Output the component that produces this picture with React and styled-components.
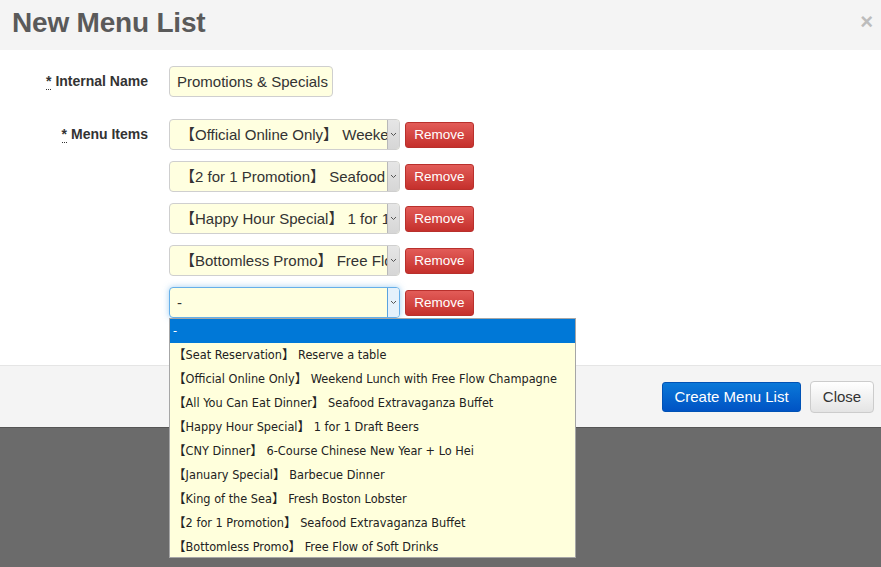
import React from 'react';
import styled, { createGlobalStyle } from 'styled-components';

const GlobalStyle = createGlobalStyle`
	html, body {
		margin: 0;
		padding: 0;
		background: #6b6b6b;
		font-family: "Liberation Sans", Arial, "Noto Sans CJK SC", sans-serif;
	}
`

const menuItems = [
	'【Official Online Only】 Weekend Lunch with Free Flow Champagne',
	'【2 for 1 Promotion】 Seafood Extravaganza Buffet',
	'【Happy Hour Special】 1 for 1 Draft Beers',
	'【Bottomless Promo】 Free Flow of Soft Drinks',
	'-',
];

const options = [
	'-',
	'【Seat Reservation】 Reserve a table',
	'【Official Online Only】 Weekend Lunch with Free Flow Champagne',
	'【All You Can Eat Dinner】 Seafood Extravaganza Buffet',
	'【Happy Hour Special】 1 for 1 Draft Beers',
	'【CNY Dinner】 6-Course Chinese New Year + Lo Hei',
	'【January Special】 Barbecue Dinner',
	'【King of the Sea】 Fresh Boston Lobster',
	'【2 for 1 Promotion】 Seafood Extravaganza Buffet',
	'【Bottomless Promo】 Free Flow of Soft Drinks',
];

const Backdrop = styled.div`
	position: relative;
	width: 881px;
	height: 567px;
	background: #6b6b6b;
	overflow: hidden;
`

const Modal = styled.div`
	width: 881px;
	background: #fff;
	border-bottom: 1px solid #555;
`

const Header = styled.div`
	height: 50px;
	background: #f4f4f4;
	display: flex;
	align-items: center;
	justify-content: space-between;
	padding: 0 8px 0 12px;
	box-sizing: border-box;
`

const Title = styled.h1`
	margin: 0;
	margin-top: -4px;
	font-size: 28px;
	font-weight: bold;
	color: #5a5a5a;
	letter-spacing: -0.2px;
`

const CloseX = styled.span`
	font-size: 22px;
	font-weight: bold;
	color: #bcbcbc;
	line-height: 1;
	margin-top: -6px;
`

const Body = styled.div`
	padding: 16px 0 47px;
	display: flex;
	flex-direction: column;
	gap: 22px;
`

const FormRow = styled.div`
	display: grid;
	grid-template-columns: 148px auto;
	column-gap: 21px;
	align-items: start;
`

const Label = styled.label`
	text-align: right;
	font-size: 14px;
	font-weight: bold;
	color: #333;
	line-height: 31px;
`

const Req = styled.abbr`
	text-decoration: none;
	border-bottom: 1px dotted #333;
	margin-right: 4px;
`

const TextInput = styled.div`
	width: 164px;
	height: 31px;
	box-sizing: border-box;
	background: #ffffe0;
	border: 1px solid #cfcfcf;
	border-radius: 4px;
	font-size: 15px;
	color: #333;
	padding: 0 7px;
	line-height: 29px;
	white-space: nowrap;
`

const ItemList = styled.div`
	display: flex;
	flex-direction: column;
	gap: 11px;
`

const ItemRow = styled.div`
	display: flex;
	align-items: center;
	gap: 5px;
`

const Select = styled.div`
	width: 231px;
	height: 31px;
	box-sizing: border-box;
	display: flex;
	background: #ffffe0;
	border: 1px solid ${({$focused}) => $focused ? '#66afe9' : '#cfcfcf'};
	border-radius: 4px;
	box-shadow: ${({$focused}) => $focused ? '0 0 6px rgba(102,175,233,0.6)' : 'none'};
	overflow: hidden;
`

const SelectText = styled.div`
	flex: 1;
	overflow: hidden;
	white-space: nowrap;
	font-size: 15px;
	color: #333;
	line-height: 29px;
	padding-left: ${({$empty}) => $empty ? '7px' : '10px'};
`

const Arrow = styled.div`
	width: 11px;
	flex: none;
	display: flex;
	align-items: center;
	justify-content: center;
	border-left: 1px solid ${({$focused}) => $focused ? '#5aa3e0' : '#b8b8b8'};
	background: ${({$focused}) => $focused ? '#e5f1fb' : 'linear-gradient(#e6e6e6, #d6d6d6)'};
`

const RemoveButton = styled.button`
	width: 69px;
	height: 26px;
	padding: 0;
	border: 1px solid #b9302c;
	border-radius: 3px;
	background: linear-gradient(#e25c58, #c5302c);
	color: #fff;
	font-family: inherit;
	font-size: 13.5px;
`

const Dropdown = styled.ul`
	position: absolute;
	left: 169px;
	top: 318px;
	width: 407px;
	height: 240px;
	margin: 0;
	padding: 0;
	list-style: none;
	box-sizing: border-box;
	overflow: hidden;
	background: #ffffdc;
	border: 1px solid #a6a6a6;
	z-index: 5;
	font-family: "DejaVu Sans Condensed", "Noto Sans CJK SC", sans-serif;
`

const Option = styled.li`
	height: 24px;
	line-height: 24px;
	padding-left: 3px;
	font-size: 12.6px;
	color: ${({$active}) => $active ? '#fff' : '#222'};
	background: ${({$active}) => $active ? '#0078d7' : 'transparent'};
	white-space: nowrap;
`

const Footer = styled.div`
	height: 62px;
	box-sizing: border-box;
	border-top: 1px solid #e5e5e5;
	background: #f4f4f4;
	display: flex;
	justify-content: flex-end;
	align-items: center;
	gap: 9px;
	padding: 0 7px 0 0;
`

const PrimaryButton = styled.button`
	width: 139px;
	height: 30px;
	border: 1px solid #0052b5;
	border-radius: 3px;
	background: linear-gradient(#0a78d8, #0053c4);
	color: #fff;
	font-family: inherit;
	font-size: 15px;
	padding: 0;
`

const DefaultButton = styled.button`
	width: 64px;
	height: 32px;
	border: 1px solid #ccc;
	border-radius: 4px;
	background: linear-gradient(#fff, #e4e4e4);
	color: #333;
	font-family: inherit;
	font-size: 15px;
	padding: 0;
`

const Chevron = () => (
	<svg width="7" height="5" viewBox="0 0 7 5">
		<path d="M1 1l2.5 2.5L6 1" fill="none" stroke="#555" strokeWidth="1"/>
	</svg>
)

export default function App() {
	return (
		<>
			<GlobalStyle/>
			<Backdrop>
				<Modal>
					<Header>
						<Title>New Menu List</Title>
						<CloseX>×</CloseX>
					</Header>
					<Body>
						<FormRow>
							<Label><Req title="required">*</Req>Internal Name</Label>
							<TextInput>Promotions &amp; Specials</TextInput>
						</FormRow>
						<FormRow>
							<Label><Req title="required">*</Req>Menu Items</Label>
							<ItemList>
								{menuItems.map((item, i) => {
									const focused = i === menuItems.length - 1;
									return (
										<ItemRow key={i}>
											<Select $focused={focused}>
												<SelectText $empty={item === '-'}>{item}</SelectText>
												<Arrow $focused={focused}><Chevron/></Arrow>
											</Select>
											<RemoveButton>Remove</RemoveButton>
										</ItemRow>
									);
								})}
							</ItemList>
						</FormRow>
					</Body>
					<Footer>
						<PrimaryButton>Create Menu List</PrimaryButton>
						<DefaultButton>Close</DefaultButton>
					</Footer>
				</Modal>
				<Dropdown>
					{options.map((opt, i) => (
						<Option key={i} $active={i === 0}>{opt}</Option>
					))}
				</Dropdown>
			</Backdrop>
		</>
	);
}
